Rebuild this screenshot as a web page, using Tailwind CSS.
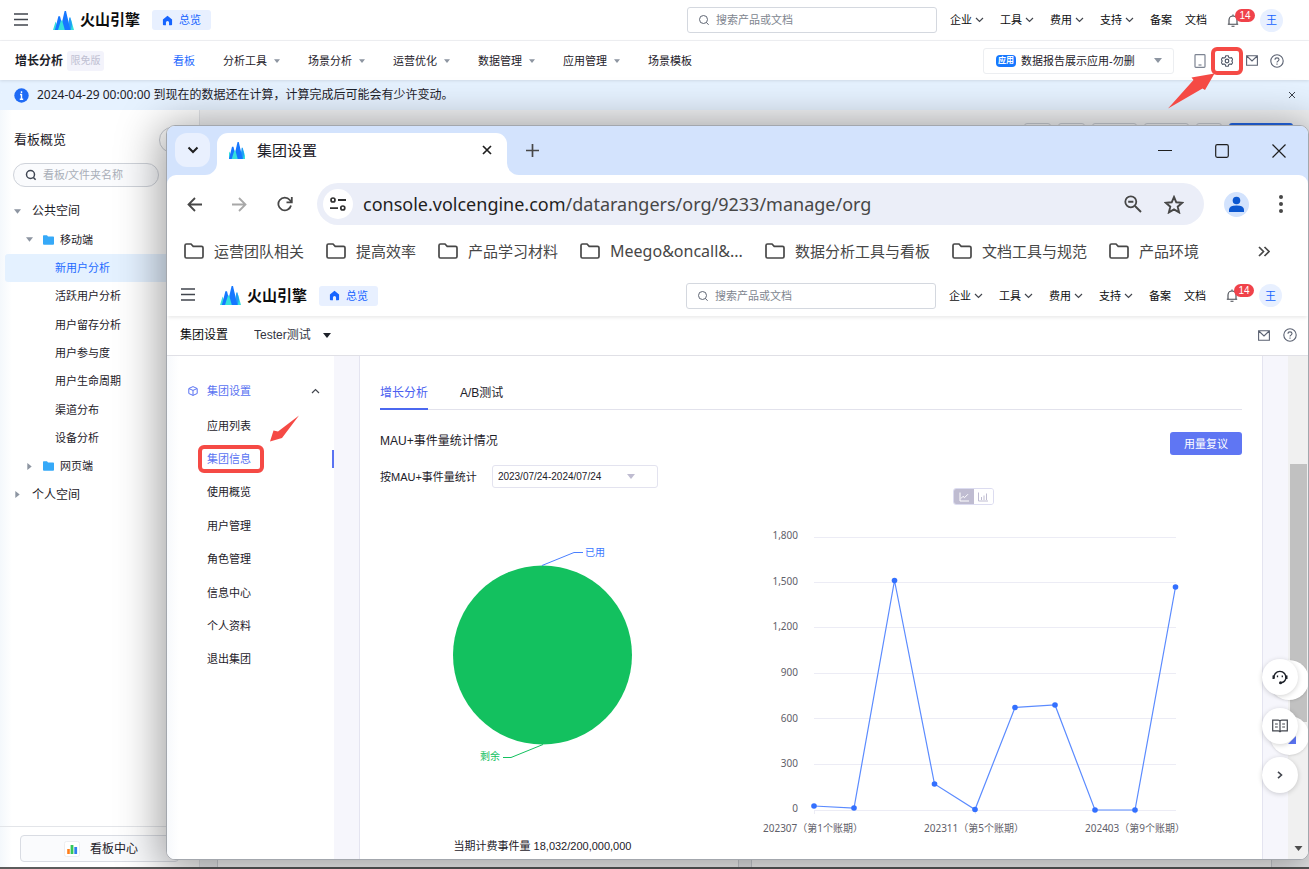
<!DOCTYPE html>
<html lang="zh-CN">
<head>
<meta charset="utf-8">
<title>增长分析 - 火山引擎</title>
<script src="https://cdn.jsdelivr.net/npm/@tailwindcss/browser@4"></script>
</head>
<body class="bg-white font-['Liberation_Sans','Noto_Sans_CJK_SC',sans-serif] text-[11px] leading-4 text-[#1d2129]">

<svg class="hidden" aria-hidden="true">
  <symbol id="menu" viewBox="0 0 14 13"><path d="M0 1h14M0 6.500h14M0 12h14" stroke="#42464e" stroke-width="1.300" fill="none"/></symbol>
  <symbol id="logo" viewBox="0 0 21 19">
    <path d="M0 19 2.600 10.500 6 19ZM15.500 19 18.200 9 21 19Z" fill="#35e0dc"/>
    <path d="M1.900 19 5.400 5.200H7L10.500 19Z" fill="#1677ff"/>
    <path d="M15.300 13 16.300 6.500H17.500L19 13.500 17.800 19H16Z" fill="#1e9df7"/>
    <path d="M7.200 19 11.600 0H13L17.400 19Z" fill="#1677ff"/>
    <path d="M5 19 8 9.600H9.200L11.800 19Z" fill="#35e0dc"/>
  </symbol>
  <symbol id="home" viewBox="0 0 12 12"><path d="M6 .8 11 5v5.300q0 .9-.9.900H7.700V8.300a1.700 1.700 0 0 0-3.400 0v2.900H1.900q-.9 0-.9-.9V5Z" fill="#1664ff"/></symbol>
  <symbol id="search" viewBox="0 0 12 12"><circle cx="5.500" cy="5.500" r="4" fill="none" stroke="currentColor"/><path d="m8.400 8.400 2.200 2.400" stroke="currentColor"/></symbol>
  <symbol id="chev" viewBox="0 0 9 6"><path d="m1 1 3.500 3.500L8 1" fill="none" stroke="#42464e" stroke-width="1.200"/></symbol>
  <symbol id="tri" viewBox="0 0 8 5"><path d="M0 0h8L4 5Z" fill="currentColor"/></symbol>
  <symbol id="bell" viewBox="0 0 12 13"><path d="M.8 10.300h10.400M2 10.300V6a4 4 0 0 1 8 0v4.300M6 .5v1.500M4.500 12.200h3" fill="none" stroke="#42464e" stroke-width="1.100"/></symbol>
  <symbol id="mail" viewBox="0 0 12 11"><path d="M.6.800h10.800v9.400H.6ZM.8 1 6 6l5.200-5" fill="none" stroke="#5b6272" stroke-width="1.100"/></symbol>
  <symbol id="help" viewBox="0 0 14 14"><circle cx="7" cy="7" r="6.200" fill="none" stroke="#5b6272" stroke-width="1.100"/><path d="M5 5.800q0-1.900 2-1.900t2 1.700q0 .9-1 1.500T7 8.500M7 9.600v1.200" fill="none" stroke="#5b6272" stroke-width="1.100"/></symbol>
  <symbol id="phone" viewBox="0 0 12 14"><rect x="1" y=".7" width="10" height="12.600" rx=".8" fill="none" stroke="#7d8492" stroke-width="1.200"/><path d="M4.500 11h3" stroke="#7d8492" stroke-width="1.200"/></symbol>
  <symbol id="gear" viewBox="0 0 24 24"><path d="M9.500 1.500h5l1 3.300 2.300 1.300 3.400-.8 2.300 4.200-2.300 2.500 2.300 2.500-2.300 4.200-3.400-.8-2.300 1.300-1 3.300h-5l-1-3.300-2.300-1.300-3.400.8L.5 14.500 2.800 12 .5 9.500l2.300-4.200 3.400.8 2.300-1.300Z" fill="none" stroke="#4e5666" stroke-width="2.200" stroke-linejoin="round"/><circle cx="12" cy="12" r="3.600" fill="none" stroke="#4e5666" stroke-width="2.400"/></symbol>
  <symbol id="folder" viewBox="0 0 20 16"><path d="M1 13.500V2.500Q1 1 2.500 1H7l2.200 2.300h8.300q1.500 0 1.500 1.500v8.700q0 1.500-1.500 1.500h-15Q1 15 1 13.500Z" fill="none" stroke="#474747" stroke-width="1.700"/></symbol>
  <symbol id="folderfill" viewBox="0 0 11 10"><path d="M0 1Q0 .3.700.3h3.300l1 1.200h5.200q.8 0 .8.800v6.500q0 .9-.9.900H.9Q0 9.700 0 8.800Z" fill="#36a9f8"/></symbol>
</svg>

<div class="relative flex h-screen min-w-[1200px] flex-col overflow-hidden">

  <header class="flex h-[41px] shrink-0 items-center border-b border-[#f0f1f4] pl-[14px] pr-[26px]">
    <button aria-label="菜单"><svg class="h-[13px] w-[14px] -translate-y-px"><use href="#menu"/></svg></button>
    <a href="#" class="ml-[25px] flex items-center gap-[6px] text-[15px] font-bold text-[#0c0d0e]"><svg class="h-[19px] w-[21px]"><use href="#logo"/></svg>火山引擎</a>
    <a href="#" class="ml-3 flex h-5 w-[59px] items-center justify-center gap-[6px] rounded-[3px] bg-[#e8f0ff] text-[#1664ff]"><svg class="size-[11px]"><use href="#home"/></svg>总览</a>
    <label class="ml-auto flex h-[26px] w-[250px] items-center gap-[6px] rounded-[3px] border border-[#d4d8df] px-[10px] text-[#5f6673]"><svg class="size-3"><use href="#search"/></svg><input aria-label="搜索" placeholder="搜索产品或文档" class="min-w-0 flex-1 outline-none placeholder:text-[#80858f]"></label>
    <nav class="ml-[13px] flex items-center gap-4 text-[#0c0d0e]">
      <a href="#" class="flex items-center gap-[3px]">企业<svg class="h-[6px] w-[9px]"><use href="#chev"/></svg></a>
      <a href="#" class="flex items-center gap-[3px]">工具<svg class="h-[6px] w-[9px]"><use href="#chev"/></svg></a>
      <a href="#" class="flex items-center gap-[3px]">费用<svg class="h-[6px] w-[9px]"><use href="#chev"/></svg></a>
      <a href="#" class="flex items-center gap-[3px]">支持<svg class="h-[6px] w-[9px]"><use href="#chev"/></svg></a>
      <a href="#">备案</a>
      <a href="#" class="-ml-[3px]">文档</a>
    </nav>
    <button aria-label="通知" class="relative ml-5 h-[13px] w-3"><svg class="h-[13px] w-3"><use href="#bell"/></svg><span class="absolute -top-[5px] left-2 h-[13px] w-[20px] rounded-full bg-[#f0424a] text-center text-[10px] leading-[13px] text-white">14</span></button>
    <button class="ml-[21px] size-[23px] rounded-full bg-[#e8f0ff] text-[#1664ff]">王</button>
  </header>

  <div class="z-10 flex h-[39px] shrink-0 items-center bg-white pl-[15px] pr-[25px] shadow-[0_1px_3px_rgba(0,0,0,0.10)]">
    <strong class="text-xs font-bold">增长分析</strong>
    <span class="ml-1 flex h-5 w-[37px] items-center justify-center rounded-[3px] bg-[#f3f3fb] text-[10px] text-[#bfc0d2]">限免版</span>
    <nav class="ml-[69px] flex items-center gap-7">
      <a href="#" class="text-[#1f6bff]">看板</a>
      <a href="#" class="flex items-center gap-[7px]">分析工具<svg class="h-1 w-[6px] text-[#8d95a1]"><use href="#tri"/></svg></a>
      <a href="#" class="flex items-center gap-[7px]">场景分析<svg class="h-1 w-[6px] text-[#8d95a1]"><use href="#tri"/></svg></a>
      <a href="#" class="flex items-center gap-[7px]">运营优化<svg class="h-1 w-[6px] text-[#8d95a1]"><use href="#tri"/></svg></a>
      <a href="#" class="flex items-center gap-[7px]">数据管理<svg class="h-1 w-[6px] text-[#8d95a1]"><use href="#tri"/></svg></a>
      <a href="#" class="flex items-center gap-[7px]">应用管理<svg class="h-1 w-[6px] text-[#8d95a1]"><use href="#tri"/></svg></a>
      <a href="#">场景模板</a>
    </nav>
    <label class="ml-auto flex h-[26px] w-[191px] items-center rounded-[3px] border border-[#eceef1] pl-3 pr-[11px]">
      <span class="flex h-3 w-5 shrink-0 items-center justify-center rounded-sm bg-[#1677ff] text-[8px] font-bold text-white">应用</span>
      <select aria-label="应用" class="ml-[5px] flex-1 appearance-none outline-none"><option>数据报告展示应用-勿删</option></select>
      <svg class="h-[5px] w-2 text-[#8d95a1]"><use href="#tri"/></svg>
    </label>
    <button aria-label="移动端" class="ml-5"><svg class="h-[14px] w-3"><use href="#phone"/></svg></button>
    <button aria-label="设置" class="relative ml-[5px] flex h-7 w-8 items-center justify-center rounded-md border-4 border-[#f54a45]"><svg class="size-3"><use href="#gear"/></svg></button>
    <button aria-label="消息" class="ml-[3px]"><svg class="h-[11px] w-3"><use href="#mail"/></svg></button>
    <button aria-label="帮助" class="ml-3"><svg class="size-[14px]"><use href="#help"/></svg></button>
  </div>

  <div class="flex h-[30px] shrink-0 items-center bg-[#e6f2ff] pl-[14px] pr-[13px] font-['Noto_Sans','Noto_Sans_CJK_SC',sans-serif] text-xs">
    <svg class="size-[15px]" viewBox="0 0 15 15"><circle cx="7.500" cy="7.500" r="7.200" fill="#1f6bf5"/><path d="M7.500 3.200v1.700M6 6.500h1.500v4.700M5.800 11.200h3.400" stroke="#fff" stroke-width="1.400" fill="none"/></svg>
    <p class="ml-2">2024-04-29 00:00:00 到现在的数据还在计算，计算完成后可能会有少许变动。</p>
    <button aria-label="关闭" class="ml-auto"><svg class="size-2" viewBox="0 0 8 8"><path d="m1 1 6 6M7 1 1 7" stroke="#3c424c"/></svg></button>
  </div>

  <div class="flex min-h-0 flex-1">
    <aside class="flex w-[200px] shrink-0 flex-col border-r border-[#e3e5e9] bg-linear-to-r from-[#f4f8fc] to-white to-[12px]">
      <div class="flex items-start justify-between pl-[14px] pt-[17px]">
        <h1 class="mt-[5px] text-[13px]">看板概览</h1>
        <button aria-label="收起" class="size-[26px] mr-[14px] rounded-full border border-[#c9cdd4] bg-white"></button>
      </div>
      <label class="ml-[13px] mt-[10px] flex h-6 w-[146px] items-center gap-[6px] rounded-full border border-[#cfd3da] bg-[#fafbfd] pl-[11px] text-[#3f4653]"><svg class="size-3 stroke-[1.5]"><use href="#search"/></svg><input aria-label="搜索看板" placeholder="看板/文件夹名称" class="w-24 outline-none placeholder:text-[#a9aeb8]"></label>
      <nav class="ml-[5px] mt-[10px] grid h-[312px] auto-rows-fr">
        <a href="#" class="flex items-center gap-[11px] pl-[9px] text-xs"><svg class="h-[5px] w-[7px] text-[#8d95a1]"><use href="#tri"/></svg>公共空间</a>
        <a href="#" class="flex items-center pl-[21px]"><svg class="h-[5px] w-[7px] text-[#8d95a1]"><use href="#tri"/></svg><svg class="ml-[10px] mr-[6px] h-[10px] w-[11px]"><use href="#folderfill"/></svg>移动端</a>
        <a href="#" class="flex items-center rounded-[3px] bg-[#e4f1ff] pl-[50px] text-[#1f6bff]">新用户分析</a>
        <a href="#" class="flex items-center pl-[50px]">活跃用户分析</a>
        <a href="#" class="flex items-center pl-[50px]">用户留存分析</a>
        <a href="#" class="flex items-center pl-[50px]">用户参与度</a>
        <a href="#" class="flex items-center pl-[50px]">用户生命周期</a>
        <a href="#" class="flex items-center pl-[50px]">渠道分布</a>
        <a href="#" class="flex items-center pl-[50px]">设备分析</a>
        <a href="#" class="flex items-center pl-[21px]"><svg class="h-[5px] w-[7px] -rotate-90 text-[#8d95a1]"><use href="#tri"/></svg><svg class="ml-[10px] mr-[6px] h-[10px] w-[11px]"><use href="#folderfill"/></svg>网页端</a>
        <a href="#" class="flex items-center gap-[11px] pl-[9px] text-xs"><svg class="h-[5px] w-[7px] -rotate-90 text-[#8d95a1]"><use href="#tri"/></svg>个人空间</a>
      </nav>
      <div class="mt-auto border-t border-[#e3e5e9] px-5 pb-[5px] pt-2">
        <button class="flex h-[27px] w-full items-center rounded border border-[#d9dce3] bg-[#fafbfd] pl-[43px] text-xs">
          <svg class="mr-[10px] size-4" viewBox="0 0 16 16"><rect x=".5" y=".5" width="15" height="15" rx="2" fill="#fff" stroke="#eceef1"/><path d="M4.500 8v5" stroke="#ff7d1a" stroke-width="2.600"/><path d="M8 4v9" stroke="#34c759" stroke-width="2.800"/><path d="M11.700 6v7" stroke="#2f80ed" stroke-width="2.800"/></svg>看板中心</button>
      </div>
    </aside>
    <main class="flex min-w-0 flex-1 flex-col bg-[#f2f3f5] pt-[13px]">
      <div class="flex justify-end gap-[7px] pr-4" aria-hidden="true">
        <span class="h-6 w-[27px] rounded-[3px] border border-[#c9cdd4]"></span><span class="h-6 w-[27px] rounded-[3px] border border-[#c9cdd4]"></span><span class="h-6 w-[45px] rounded-[3px] border border-[#c9cdd4]"></span><span class="h-6 w-[45px] rounded-[3px] border border-[#c9cdd4]"></span><span class="h-6 w-[26px] rounded-[3px] border border-[#c9cdd4]"></span><span class="h-6 w-16 rounded-[3px] bg-[#2468e8]"></span>
      </div>
      <div class="mt-4 grid flex-1 grid-cols-2 gap-3 pl-[17px] pr-[37px]" aria-hidden="true"><span class="border-x border-[#d3d6db] bg-white"></span><span class="border-x border-[#d3d6db] bg-white"></span></div>
    </main>
  </div>
  <div class="h-[2px] shrink-0 bg-[#5c5c5c]"></div>

  <!-- browser window floating over the console -->
  <section class="absolute bottom-[9px] left-[166px] right-0 top-[125px] z-20 flex flex-col overflow-hidden rounded-[9px] border border-[#a3a7ad] bg-white shadow-[0_6px_44px_6px_rgba(0,0,0,0.38)]">
    <div class="flex h-[49px] shrink-0 items-end bg-[#d3e3fd]">
      <button aria-label="搜索标签页" class="mb-2 ml-2 flex h-[34px] w-[35px] items-center justify-center rounded-xl bg-[#e9f0fe]"><svg class="h-2 w-3" viewBox="0 0 12 8"><path d="m1.500 1.500 4.500 4.500 4.500-4.500" fill="none" stroke="#1f1f1f" stroke-width="2"/></svg></button>
      <div class="relative ml-[7px] flex h-[42px] w-[290px] items-center rounded-t-[11px] bg-white pb-2 pl-3 pr-[15px] font-['Noto_Sans','Noto_Sans_CJK_SC',sans-serif] text-[15px]">
        <svg class="absolute -left-3 bottom-0 size-3" viewBox="0 0 12 12"><path d="M12 0v12H0A12 12 0 0 0 12 0" fill="#fff"/></svg>
        <svg class="absolute -right-3 bottom-0 size-3" viewBox="0 0 12 12"><path d="M0 0v12h12A12 12 0 0 1 0 0" fill="#fff"/></svg>
        <svg class="mr-3 h-[17px] w-4" viewBox="2 0 18 19" preserveAspectRatio="none"><use href="#logo" width="21" height="19"/></svg>集团设置
        <button aria-label="关闭标签页" class="ml-auto"><svg class="size-[10px]" viewBox="0 0 10 10"><path d="m1 1 8 8M9 1 1 9" stroke="#1f1f1f" stroke-width="1.700"/></svg></button>
      </div>
      <button aria-label="新标签页" class="mb-[18px] ml-[19px]"><svg class="size-[13px]" viewBox="0 0 13 13"><path d="M6.500 0v13M0 6.500h13" stroke="#474747" stroke-width="1.700"/></svg></button>
      <div class="mb-[17px] ml-auto mr-[22px] flex items-center gap-[43px]">
        <button aria-label="最小化"><svg class="size-[14px]" viewBox="0 0 14 14"><path d="M0 6.500h14" stroke="#1f1f1f"/></svg></button>
        <button aria-label="最大化"><svg class="size-[14px]" viewBox="0 0 14 14"><rect x=".7" y=".7" width="12.600" height="12.600" rx="1.500" fill="none" stroke="#1f1f1f" stroke-width="1.200"/></svg></button>
        <button aria-label="关闭窗口"><svg class="size-[14px]" viewBox="0 0 14 14"><path d="m.5.500 13 13M13.500.500l-13 13" stroke="#1f1f1f" stroke-width="1.200"/></svg></button>
      </div>
    </div>

    <div class="bg-[#d3e3fd]"><div class="flex h-[58px] items-center rounded-t-[9px] bg-white pl-5 pr-[25px]">
      <button aria-label="后退"><svg class="size-[15px]" viewBox="0 0 15 15"><path d="M15 7.500H1.500M8 1 1.500 7.500 8 14" fill="none" stroke="#474747" stroke-width="1.800"/></svg></button>
      <button aria-label="前进" class="ml-[30px]"><svg class="size-[15px]" viewBox="0 0 15 15"><path d="M0 7.500h13.500M7 1l6.500 6.500L7 14" fill="none" stroke="#a8a8a8" stroke-width="1.800"/></svg></button>
      <button aria-label="刷新" class="ml-[30px]"><svg class="size-4" viewBox="0 0 16 16"><path d="M14 9.500A6.400 6.400 0 1 1 12.800 4L14.500 6M14.800 1v5.300H9.500" fill="none" stroke="#474747" stroke-width="1.800"/></svg></button>
      <div class="ml-6 flex h-[42px] flex-1 items-center rounded-full bg-[#ebeef8] pl-[6px] pr-5">
        <button aria-label="网站信息" class="flex size-[30px] items-center justify-center rounded-full bg-white"><svg class="h-[14px] w-4" viewBox="0 0 16 14"><path d="M8 3h8M0 11.200h8" stroke="#303030" stroke-width="1.800"/><circle cx="3" cy="3" r="2" fill="none" stroke="#303030" stroke-width="1.700"/><circle cx="12.800" cy="11" r="2" fill="none" stroke="#303030" stroke-width="1.700"/></svg></button>
        <p class="ml-[10px] font-['Noto_Sans','Noto_Sans_CJK_SC',sans-serif] text-lg text-[#474747]"><span class="text-[#1f1f1f]">console.volcengine.com</span>/datarangers/org/9233/manage/org</p>
        <button aria-label="缩放" class="ml-auto"><svg class="size-[18px]" viewBox="0 0 18 18"><circle cx="6.800" cy="6.800" r="5.500" fill="none" stroke="#474747" stroke-width="1.800"/><path d="M4.200 6.800h5.200M11 11l6 6" stroke="#474747" stroke-width="1.900"/></svg></button>
        <button aria-label="收藏" class="ml-[22px]"><svg class="h-[19px] w-5" viewBox="0 0 20 19"><path d="m10 2 2.300 5.300 5.900.5-4.500 3.900 1.400 5.700L10 14.400l-5.100 3 1.400-5.700-4.500-3.900 5.900-.5Z" fill="none" stroke="#474747" stroke-width="1.900"/></svg></button>
      </div>
      <button aria-label="用户" class="ml-5"><svg class="size-[25px]" viewBox="0 0 25 25"><circle cx="12.500" cy="12.500" r="12.500" fill="#d3e3fd"/><circle cx="12.500" cy="8.500" r="3.800" fill="#0b57d0"/><path d="M5 20v-2.200q0-4.300 7.500-4.300t7.500 4.300V20Z" fill="#0b57d0"/></svg></button>
      <button aria-label="更多" class="ml-[30px]"><svg class="h-[18px] w-1" viewBox="0 0 4 18"><g fill="#474747"><circle cx="2" cy="2" r="2"/><circle cx="2" cy="9" r="2"/><circle cx="2" cy="16" r="2"/></g></svg></button>
    </div></div>

    <nav class="flex h-9 shrink-0 items-center gap-[22px] pl-[17px] pr-[38px] font-['Noto_Sans','Noto_Sans_CJK_SC',sans-serif] text-[15px] text-[#474747]">
      <a href="#" class="flex items-center gap-[10px]"><svg class="h-4 w-5"><use href="#folder"/></svg>运营团队相关</a>
      <a href="#" class="flex items-center gap-[10px]"><svg class="h-4 w-5"><use href="#folder"/></svg>提高效率</a>
      <a href="#" class="flex items-center gap-[10px]"><svg class="h-4 w-5"><use href="#folder"/></svg>产品学习材料</a>
      <a href="#" class="flex items-center gap-[10px] text-base"><svg class="h-4 w-5"><use href="#folder"/></svg>Meego&amp;oncall&amp;...</a>
      <a href="#" class="flex items-center gap-[10px]"><svg class="h-4 w-5"><use href="#folder"/></svg>数据分析工具与看板</a>
      <a href="#" class="flex items-center gap-[10px]"><svg class="h-4 w-5"><use href="#folder"/></svg>文档工具与规范</a>
      <a href="#" class="flex items-center gap-[10px]"><svg class="h-4 w-5"><use href="#folder"/></svg>产品环境</a>
      <button aria-label="更多书签" class="ml-auto"><svg class="h-[11px] w-3" viewBox="0 0 12 11"><path d="m1 1 4.500 4.500L1 10M6.500 1 11 5.500 6.500 10" fill="none" stroke="#474747" stroke-width="1.700"/></svg></button>
    </nav>

    <header class="z-10 mt-[6px] flex h-[41px] shrink-0 items-center bg-white pl-[14px] pr-[26px] shadow-[0_3px_3px_-1px_rgba(0,0,0,0.08)]">
      <button aria-label="菜单"><svg class="h-[13px] w-[14px] -translate-y-px"><use href="#menu"/></svg></button>
      <a href="#" class="ml-[25px] flex items-center gap-[6px] text-[15px] font-bold text-[#0c0d0e]"><svg class="h-[19px] w-[21px]"><use href="#logo"/></svg>火山引擎</a>
      <a href="#" class="ml-3 flex h-5 w-[59px] items-center justify-center gap-[6px] rounded-[3px] bg-[#e8f0ff] text-[#1664ff]"><svg class="size-[11px]"><use href="#home"/></svg>总览</a>
      <label class="ml-auto flex h-[26px] w-[250px] items-center gap-[6px] rounded-[3px] border border-[#d4d8df] px-[10px] text-[#5f6673]"><svg class="size-3"><use href="#search"/></svg><input aria-label="搜索" placeholder="搜索产品或文档" class="min-w-0 flex-1 outline-none placeholder:text-[#80858f]"></label>
      <nav class="ml-[13px] flex items-center gap-4 text-[#0c0d0e]">
        <a href="#" class="flex items-center gap-[3px]">企业<svg class="h-[6px] w-[9px]"><use href="#chev"/></svg></a>
        <a href="#" class="flex items-center gap-[3px]">工具<svg class="h-[6px] w-[9px]"><use href="#chev"/></svg></a>
        <a href="#" class="flex items-center gap-[3px]">费用<svg class="h-[6px] w-[9px]"><use href="#chev"/></svg></a>
        <a href="#" class="flex items-center gap-[3px]">支持<svg class="h-[6px] w-[9px]"><use href="#chev"/></svg></a>
        <a href="#">备案</a>
        <a href="#" class="-ml-[3px]">文档</a>
      </nav>
      <button aria-label="通知" class="relative ml-5 h-[13px] w-3"><svg class="h-[13px] w-3"><use href="#bell"/></svg><span class="absolute -top-[5px] left-2 h-[13px] w-[20px] rounded-full bg-[#f0424a] text-center text-[10px] leading-[13px] text-white">14</span></button>
      <button class="ml-[21px] size-[23px] rounded-full bg-[#e8f0ff] text-[#1664ff]">王</button>
    </header>

    <div class="flex h-10 shrink-0 items-center border-b border-[#e0e0e6] pb-px pl-[13px] pr-[11px] text-xs">
      <strong class="font-normal text-[#0c0d0e]">集团设置</strong>
      <label class="ml-[26px] flex items-center gap-3"><select aria-label="集团" class="appearance-none text-[#33343f] outline-none"><option>Tester测试</option></select><svg class="h-[5px] w-2"><use href="#tri"/></svg></label>
      <button aria-label="消息" class="ml-auto"><svg class="h-[11px] w-3"><use href="#mail"/></svg></button>
      <button aria-label="帮助" class="ml-[13px]"><svg class="size-[14px]"><use href="#help"/></svg></button>
    </div>

    <div class="flex min-h-0 flex-1 bg-[#f6f6fc]">
      <aside class="w-[167px] shrink-0 bg-linear-to-r from-[#f7f9fc] to-white to-[12px]">
        <button class="mt-[26px] flex h-[18px] w-full items-center pl-[21px] pr-[14px] text-[#5a73f2]"><svg class="mr-[9px] size-[10px]" viewBox="0 0 10 10"><path d="M5 .6 9.200 2.500v5L5 9.400.8 7.500v-5ZM1 2.600 5 4.400l4-1.800M5 4.400v5" fill="none" stroke="#5a73f2" stroke-linejoin="round"/></svg>集团设置<svg class="ml-auto h-[6px] w-[9px] rotate-180"><use href="#chev"/></svg></button>
        <nav class="mt-[9px] grid h-[267px] auto-rows-fr">
          <a href="#" class="flex items-center pl-10">应用列表</a>
          <a href="#" class="flex items-center justify-between pl-[31px] text-[#5a73f2]"><span class="flex h-7 w-[66px] items-center rounded-md border-4 border-[#f54a45] pl-[5px]">集团信息</span><span class="h-[18px] w-[2px] bg-[#5a73f2]"></span></a>
          <a href="#" class="flex items-center pl-10">使用概览</a>
          <a href="#" class="flex items-center pl-10">用户管理</a>
          <a href="#" class="flex items-center pl-10">角色管理</a>
          <a href="#" class="flex items-center pl-10">信息中心</a>
          <a href="#" class="flex items-center pl-10">个人资料</a>
          <a href="#" class="flex items-center pl-10">退出集团</a>
        </nav>
      </aside>
      <main class="ml-[25px] mr-[25px] min-w-0 flex-1 overflow-hidden border-x border-[#e4e4f0] bg-white px-5">
        <div class="flex h-[54px] items-end gap-8 border-b border-[#e2e2ec] text-xs">
          <a href="#" class="-mb-px h-[25px] border-b-2 border-[#4b68f0] text-[#4b5ff0]">增长分析</a>
          <a href="#" class="h-6">A/B测试</a>
        </div>
        <div class="mt-[22px] flex items-start justify-between">
          <h2 class="mt-px text-xs">MAU+事件量统计情况</h2>
          <button class="h-[23px] w-[72px] rounded-[3px] bg-[#5f76f3] text-white">用量复议</button>
        </div>
        <div class="mt-[10px] flex items-center">
          <label for="range">按MAU+事件量统计</label>
          <div class="ml-[15px] flex h-[23px] w-[166px] items-center rounded-[3px] border border-[#e3e3ef] pl-[5px] pr-[22px]"><select id="range" class="flex-1 appearance-none text-[10px] outline-none"><option>2023/07/24-2024/07/24</option></select><svg class="h-[5px] w-2 text-[#bfbcd1]"><use href="#tri"/></svg></div>
        </div>
        <div class="flex">
          <div class="flex w-[325px] shrink-0 flex-col items-center pt-[52px]">
            <svg class="h-[230px] w-[325px]" viewBox="0 0 325 230" role="img" aria-label="用量占比">
              <circle cx="162.500" cy="115" r="89.500" fill="#13c15f"/>
              <path d="M162 25.500 194 12.500h9" fill="none" stroke="#4a80ff"/><text x="205" y="16" font-size="10" fill="#3b77ff">已用</text>
              <path d="M163 204.500 131 217.500h-8" fill="none" stroke="#13c15f"/><text x="100" y="220" font-size="10" fill="#13c15f">剩余</text>
            </svg>
            <p class="mt-[68px]">当期计费事件量 18,032/200,000,000</p>
          </div>
          <div class="flex min-w-0 flex-1 flex-col items-center">
            <div class="flex h-[17px] w-[41px] overflow-hidden rounded-[3px] border border-[#dcdcf0]">
              <button aria-label="折线图" class="flex flex-1 items-center justify-center bg-[#bfbcd1]"><svg class="size-[10px]" viewBox="0 0 10 10"><path d="M1 .5v8.500h9M2 6.500l2-2.200 1.500 1.400L9 2.200" fill="none" stroke="#fff"/></svg></button>
              <button aria-label="柱状图" class="flex flex-1 items-center justify-center bg-white"><svg class="size-[10px]" viewBox="0 0 10 10"><path d="M.5.500v8.500h9.500M3.500 8V5M6 8V3.500M8.500 8V1.500" fill="none" stroke="#bfbcd1"/></svg></button>
            </div>
            <svg class="mt-[15px] h-[320px] w-[431px] font-['Noto_Sans','Noto_Sans_CJK_SC',sans-serif]" viewBox="758 520 431 320" role="img" aria-label="账期用量趋势">
              <path d="M814 537.500h362M814 582.500h362M814 627.500h362M814 673.500h362M814 718.500h362M814 764.500h362M814 810.500h362M814.500 810v4M975.500 810v4M1135.500 810v4" stroke="#ececf5" fill="none"/>
              <g font-size="10" fill="#5f6069" text-anchor="end"><text x="798" y="539">1,800</text><text x="798" y="585">1,500</text><text x="798" y="630">1,200</text><text x="798" y="676">900</text><text x="798" y="722">600</text><text x="798" y="767">300</text><text x="798" y="812">0</text></g>
              <g font-size="10" fill="#5f6069" text-anchor="middle"><text x="813" y="832">202307（第1个账期）</text><text x="974" y="832">202311（第5个账期）</text><text x="1135" y="832">202403（第9个账期）</text></g>
              <path d="m814 806 40 2 40.500-227.500 40 203.500 40.500 25.500 40-102 40-2.500 40 105h40l40.500-223" fill="none" stroke="#5b8bff" stroke-width="1.200"/>
              <g fill="#3370ff"><circle cx="814" cy="806" r="2.800"/><circle cx="854" cy="808" r="2.800"/><circle cx="894.500" cy="580.500" r="2.800"/><circle cx="934.500" cy="784" r="2.800"/><circle cx="975" cy="809.500" r="2.800"/><circle cx="1015" cy="707.500" r="2.800"/><circle cx="1055" cy="705" r="2.800"/><circle cx="1095" cy="810" r="2.800"/><circle cx="1135" cy="810" r="2.800"/><circle cx="1175.500" cy="587" r="2.800"/></g>
            </svg>
          </div>
        </div>
      </main>
      <div class="flex w-5 shrink-0 flex-col items-center bg-[#f0f0f0] pb-2 pt-[108px]" aria-hidden="true">
        <span class="h-2/3 w-[17px] bg-[#c1c1c1]"></span>
        <svg class="mt-auto h-[5px] w-[9px] text-[#4d4d4d]"><use href="#tri"/></svg>
      </div>
    </div>
  </section>

  <!-- annotation arrows -->
  <svg class="pointer-events-none absolute left-[1166px] top-[72px] z-30 h-10 w-[50px]" viewBox="0 0 50 40"><path d="M2 36.500 27.500 8 25.500 5.500 48.500 1.500 39 18 36.500 16.500Z" fill="#f54a45"/></svg>
  <svg class="pointer-events-none absolute left-[269px] top-[414px] z-30 h-7 w-[31px]" viewBox="0 0 31 28"><path d="M30 1.500 14.500 22 13 24 1 27.500 4.500 16.500 9 17.500Z" fill="#f54a45"/></svg>

  <!-- floating helper buttons -->
  <div class="absolute right-px top-[660px] z-30 h-[134px] w-[46px] overflow-hidden">
    <span class="absolute -right-px top-0 size-10 rounded-full bg-white shadow-sm"></span>
    <span class="absolute -right-px top-[56px] size-[39px] rounded-full bg-white shadow-sm"></span>
    <svg class="absolute left-[26px] top-[76px] size-2" viewBox="0 0 8 8"><path d="M8 0v8H0Z" fill="#5a73f2"/></svg>
  </div>
  <div class="absolute right-[11px] top-[659px] z-30 flex flex-col gap-[13px]">
    <button aria-label="客服" class="flex size-9 items-center justify-center rounded-full bg-white shadow-[0_1px_5px_rgba(0,0,0,0.18)]"><svg class="size-4" viewBox="0 0 16 16"><path d="M2 9.500A6 6 0 1 1 13.800 9.500Q13 13 9 13.800" fill="none" stroke="#1d2129" stroke-width="1.400"/><path d="M1.500 6.500v3.500M14.500 6.500v3.500" stroke="#1d2129" stroke-width="2"/><path d="M5.500 6.500v1.700M10.300 6.500v1.700" stroke="#1d2129" stroke-width="1.300"/><circle cx="8.500" cy="13.800" r="1.500" fill="#1d2129"/></svg></button>
    <button aria-label="文档" class="flex size-9 items-center justify-center rounded-full bg-white shadow-[0_1px_5px_rgba(0,0,0,0.18)]"><svg class="h-[14px] w-4" viewBox="0 0 16 14"><path d="M.7 1.200h5.500Q8 1.200 8 2.500q0-1.300 1.800-1.300h5.500v10.600H9.800Q8 11.800 8 13.200q0-1.400-1.800-1.400H.7ZM8 2.500v10.500M3 5h2.800M3 8h2.800M10.200 5H13M10.200 8H13" fill="none" stroke="#42464e" stroke-width="1.200"/></svg></button>
    <button aria-label="收起" class="flex size-9 items-center justify-center rounded-full bg-white shadow-[0_1px_5px_rgba(0,0,0,0.18)]"><svg class="h-2 w-[6px]" viewBox="0 0 6 8"><path d="m1 .8 3.500 3.200L1 7.200" fill="none" stroke="#42464e" stroke-width="1.600"/></svg></button>
  </div>
</div>
</body>
</html>
